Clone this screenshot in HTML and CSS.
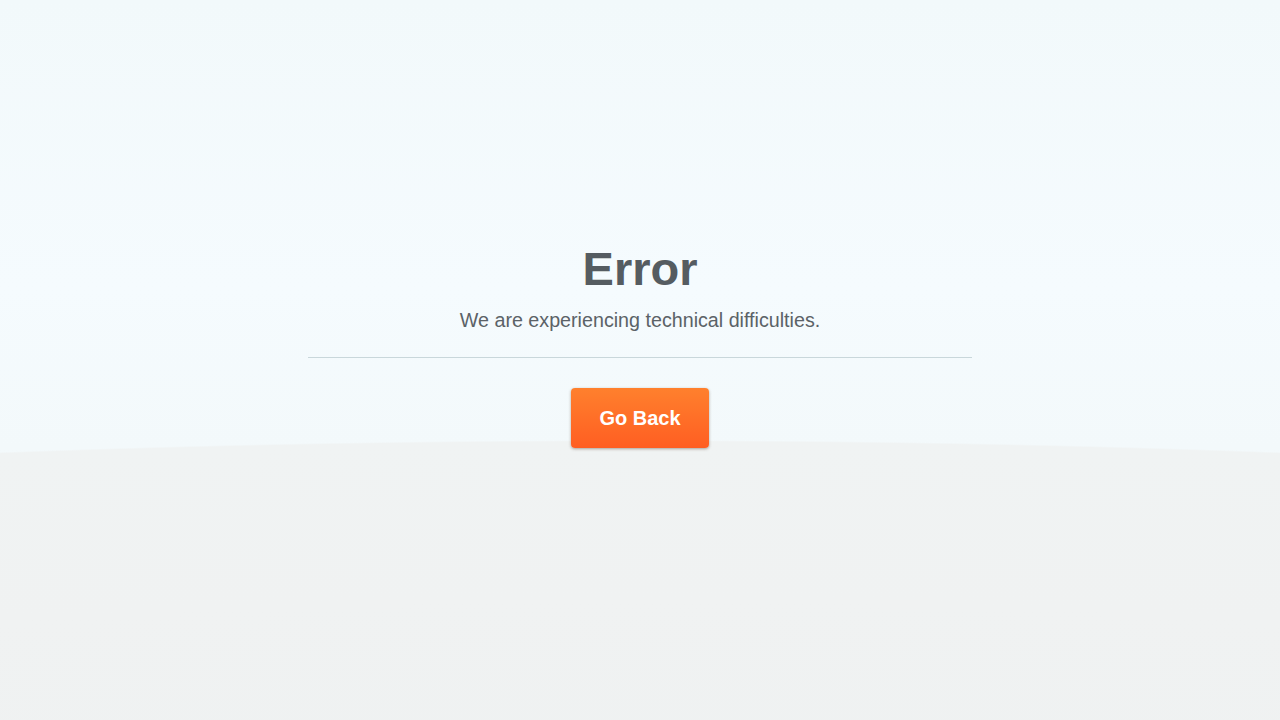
FILE: index.html
```html
<!DOCTYPE html>
<html lang="en">
<head>
<meta charset="utf-8">
<title>Error</title>
<link rel="stylesheet" href="styles.css">
</head>
<body>
<main class="page">
  <section class="message">
    <h1 class="title">Error</h1>
    <p class="subtitle">We are experiencing technical difficulties.</p>
    <hr class="divider">
    <a class="btn" href="#">Go Back</a>
  </section>
</main>
</body>
</html>
```
FILE: styles.css
```css
html, body {
  margin: 0;
  padding: 0;
  height: 100%;
}
body {
  font-family: "Liberation Sans", Arial, Helvetica, sans-serif;
  background:
    radial-gradient(2633px 400px at 50% 840px, #eef1f1 0, #f0f2f2 60%, #f0f3f3 99.6%, rgba(240,243,243,0) 100%),
    linear-gradient(180deg, #f2f9fb 0%, #f5fbfe 40%, #f3f9fb 62%, #eff5f6 100%);
  background-repeat: no-repeat;
  overflow: hidden;
}
.page {
  height: 720px;
  display: flex;
  justify-content: center;
}
.message {
  width: 664px;
  padding-top: 241px;
  display: flex;
  flex-direction: column;
  align-items: center;
}
.title {
  margin: 0;
  font-size: 47px;
  line-height: 56px;
  font-weight: 700;
  color: #555c61;
}
.subtitle {
  margin: 0;
  font-size: 19.7px;
  line-height: 24px;
  color: #5b6267;
  margin-top: 11px;
}
.divider {
  width: 664px;
  margin: 25px 0 0;
  border: 0;
  height: 1px;
  background: #c9d7db;
}
.btn {
  margin-top: 30px;
  width: 138px;
  height: 60px;
  box-sizing: border-box;
  display: flex;
  align-items: center;
  justify-content: center;
  border-radius: 4px;
  background: linear-gradient(180deg, #ff802d 0%, #ff5e22 100%);
  box-shadow: 0 1px 3px rgba(80, 60, 40, 0.45);
  color: #ffffff;
  font-size: 20px;
  font-weight: 700;
  text-decoration: none;
}
```
